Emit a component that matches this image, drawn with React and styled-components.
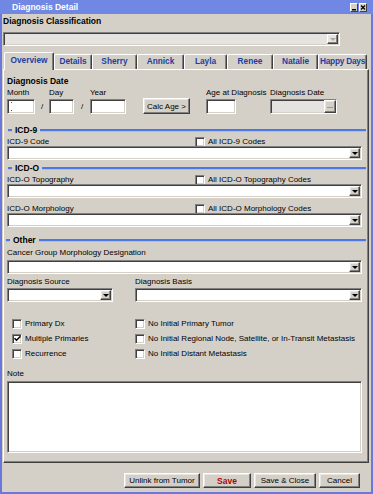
import React from 'react';
import styled, { createGlobalStyle, css } from 'styled-components';

const Global = createGlobalStyle`
  html, body { margin: 0; padding: 0; background: #d4d0c8; }
  body { font-family: "Liberation Sans", Arial, sans-serif; font-size: 8px; color: #000; }
  * { box-sizing: border-box; }
`;

const sunken = css`
  border: 1px solid;
  border-color: #808080 #ffffff #ffffff #808080;
  box-shadow: inset 1px 1px 0 #404040, inset -1px -1px 0 #d4d0c8;
`;

const raised = css`
  border: 1px solid;
  border-color: #ffffff #404040 #404040 #ffffff;
  box-shadow: inset -1px -1px 0 #808080, inset 1px 1px 0 #e8e6e0;
`;

const Window = styled.div`
  width: 373px;
  height: 494px;
  display: flex;
  flex-direction: column;
  background: #d4d0c8;
`;

const TitleBar = styled.div`
  height: 14px;
  flex: none;
  background: #7087e4;
  display: flex;
  align-items: center;
  padding: 0 6px 0 12px;
`;

const TitleText = styled.div`
  flex: 1;
  color: #fff;
  font-weight: bold;
  font-size: 8.5px;
  line-height: 14px;
`;

const TitleBtn = styled.div`
  width: 8px;
  height: 9px;
  margin-left: 1px;
  background: #d4d0c8;
  border: 1px solid;
  border-color: #fff #404040 #404040 #fff;
  display: flex;
  align-items: center;
  justify-content: center;
`;

const Frame = styled.div`
  flex: 1;
  display: flex;
  flex-direction: column;
  border: 2px solid #6a78de;
  border-top: none;
  padding-left: 1px;
`;

const ClassLabel = styled.div`
  margin-top: 2px;
  height: 10px;
  line-height: 10px;
  font-weight: bold;
  font-size: 8.5px;
`;

const SelectBox = styled.div`
  ${sunken};
  width: ${p => p.$w || '100%'};
  height: 14px;
  margin-top: ${p => p.$mt || 0}px;
  padding: 1px;
  background: ${p => (p.$disabled ? '#e4e3e0' : '#fff')};
  display: flex;
  justify-content: flex-end;
  flex: none;
`;

const DropBtn = styled.div`
  ${raised};
  width: 11px;
  background: ${p => (p.$disabled ? '#e6e5e2' : '#d4d0c8')};
  display: flex;
  align-items: center;
  justify-content: center;
`;

const Tri = styled.span`
  width: 0;
  height: 0;
  border-left: 3px solid transparent;
  border-right: 3px solid transparent;
  border-top: 3px solid ${p => (p.$disabled ? '#a8a8a8' : '#000')};
`;

const Select = ({ w, mt, disabled }) => (
  <SelectBox $w={w} $mt={mt} $disabled={disabled}>
    <DropBtn $disabled={disabled}>
      <Tri $disabled={disabled} />
    </DropBtn>
  </SelectBox>
);

const TabRow = styled.div`
  margin-top: 6px;
  height: 17px;
  display: flex;
  align-items: flex-end;
  padding-left: 1px;
  position: relative;
  z-index: 1;
`;

const Tab = styled.div`
  width: ${p => p.$w}px;
  height: ${p => (p.$active ? 18 : 15)}px;
  margin-bottom: ${p => (p.$active ? -1 : 0)}px;
  background: #d4d0c8;
  border-top: 1px solid #fff;
  border-left: 1px solid #fff;
  border-right: 1px solid #404040;
  box-shadow: inset -1px 0 0 #808080;
  border-radius: 2px 2px 0 0;
  color: #1c3f9f;
  font-weight: bold;
  font-size: 8.3px;
  letter-spacing: ${p => (p.$tight ? '-0.25px' : '0')};
  line-height: ${p => (p.$active ? 14 : 13)}px;
  text-align: center;
  white-space: nowrap;
  display: flex;
  justify-content: center;
`;

const Panel = styled.div`
  width: 366px;
  height: 394px;
  border: 1px solid;
  border-color: #fff #404040 #404040 #fff;
  box-shadow: inset -1px -1px 0 #808080;
  padding: 0 6px 0 3px;
  display: flex;
  flex-direction: column;
`;

const Label = styled.div`
  margin-top: ${p => p.$mt || 0}px;
  height: 10px;
  line-height: 10px;
  white-space: nowrap;
  font-weight: ${p => (p.$bold ? 'bold' : 'normal')};
  font-size: ${p => (p.$bold ? '8.5px' : '8px')};
`;

const DateGrid = styled.div`
  margin-top: 2px;
  display: grid;
  grid-template-columns: 28px 14px 25px 16px 36px 17px 47px 16px 30px 34px 67px;
  grid-template-rows: 10px 15px;
  row-gap: 1px;
  align-items: center;
`;

const Cell = styled.div`
  grid-column: ${p => p.$c};
  grid-row: ${p => p.$r};
  line-height: 10px;
  white-space: nowrap;
  text-align: ${p => p.$center ? 'center' : 'left'};
`;

const TextInput = styled.div`
  ${sunken};
  grid-column: ${p => p.$c};
  grid-row: 2;
  height: 15px;
  background: ${p => (p.$disabled ? '#e4e3e0' : '#fff')};
  display: flex;
  justify-content: flex-end;
  padding: 1px;
`;

const Caret = styled.span`
  margin: 1px auto 1px 2px;
  width: 1px;
  border-top: 1px solid #2a4fd0;
  border-bottom: 1px solid #2a4fd0;
`;

const Button = styled.div`
  ${raised};
  width: ${p => p.$w}px;
  height: ${p => p.$h || 15}px;
  background: #d4d0c8;
  display: flex;
  align-items: center;
  justify-content: center;
  white-space: nowrap;
  font-size: ${p => (p.$bold ? '8.5px' : '8px')};
  font-weight: ${p => (p.$bold ? 'bold' : 'normal')};
  color: ${p => (p.$bold ? '#b40000' : '#000')};
`;

const CalcBtn = styled(Button)`
  grid-column: 7;
  grid-row: 2;
  align-self: end;
`;

const EllBtn = styled.div`
  ${raised};
  width: 12px;
  margin: -1px;
  background: #d4d0c8;
  font-size: 7px;
  line-height: 9px;
  text-align: center;
`;

const SectionHead = styled.div`
  margin-top: ${p => p.$mt}px;
  margin-right: -4px;
  margin-left: ${p => p.$ml || 1}px;
  height: 8px;
  display: flex;
  align-items: center;
  gap: 3px;
  font-weight: bold;
  font-size: 8.5px;
`;

const Rule = styled.span`
  height: 2px;
  background: #4b78e4;
  box-shadow: 0 1px 0 #a9bff2;
  flex: ${p => (p.$short ? '0 0 4px' : '1')};
`;

const LabelRow = styled.div`
  display: grid;
  grid-template-columns: 188px 1fr;
  align-items: center;
  height: 10px;
  margin-top: ${p => p.$mt || 0}px;
`;

const Check = styled.label`
  display: flex;
  align-items: center;
  gap: 3px;
  white-space: nowrap;
  height: 15px;
`;

const Box = styled.span`
  ${sunken};
  width: 10px;
  height: 10px;
  background: #fff;
  flex: none;
  display: flex;
  align-items: center;
  justify-content: center;
`;

const CheckBox = ({ checked, children }) => (
  <Check>
    <Box>
      {checked && (
        <svg width="7" height="7" viewBox="0 0 7 7">
          <path d="M0.5 3.2 L2.5 5.2 L6.5 1.2" stroke="#000" strokeWidth="1.5" fill="none" />
        </svg>
      )}
    </Box>
    {children}
  </Check>
);

const TwoCol = styled.div`
  display: grid;
  grid-template-columns: ${p => p.$cols};
  column-gap: ${p => p.$gap || 0}px;
  margin-top: ${p => p.$mt || 0}px;
  padding-left: ${p => p.$pl || 0}px;
`;

const Col = styled.div`
  display: flex;
  flex-direction: column;
`;

const NoteArea = styled.div`
  ${sunken};
  margin-top: 2px;
  height: 72px;
  background: #fff;
`;

const ButtonRow = styled.div`
  flex: 1;
  display: flex;
  justify-content: flex-end;
  align-items: flex-start;
  gap: 3px;
  padding: 10px 11px 0 0;
`;

const tabs = [
  ['Overview', 50],
  ['Details', 38],
  ['Sherry', 45],
  ['Annick', 47],
  ['Layla', 43],
  ['Renee', 46],
  ['Natalie', 45],
  ['Happy Days', 49],
];

export default function App() {
  return (
    <>
      <Global />
      <Window>
        <TitleBar>
          <TitleText>Diagnosis Detail</TitleText>
          <TitleBtn>
            <svg width="6" height="7" viewBox="0 0 6 7">
              <rect x="1" y="5" width="4" height="1.5" fill="#000" />
            </svg>
          </TitleBtn>
          <TitleBtn>
            <svg width="6" height="7" viewBox="0 0 6 7">
              <path d="M1 1.5 L5 5.5 M5 1.5 L1 5.5" stroke="#000" strokeWidth="1.2" />
            </svg>
          </TitleBtn>
        </TitleBar>
        <Frame>
          <ClassLabel>Diagnosis Classification</ClassLabel>
          <Select w="337px" mt={6} disabled />
          <TabRow>
            {tabs.map(([t, w], i) => (
              <Tab key={t} $w={w} $active={i === 0} $tight={t === 'Happy Days'}>{t}</Tab>
            ))}
          </TabRow>
          <Panel>
            <Label $bold $mt={6}>Diagnosis Date</Label>
            <DateGrid>
              <Cell $c={1} $r={1}>Month</Cell>
              <Cell $c={3} $r={1}>Day</Cell>
              <Cell $c={5} $r={1}>Year</Cell>
              <Cell $c={9} $r={1}>Age at Diagnosis</Cell>
              <Cell $c={11} $r={1}>Diagnosis Date</Cell>
              <TextInput $c={1}><Caret /></TextInput>
              <Cell $c={2} $r={2} $center>/</Cell>
              <TextInput $c={3} />
              <Cell $c={4} $r={2} $center>/</Cell>
              <TextInput $c={5} />
              <CalcBtn $w={47} $h={16}>Calc Age &gt;</CalcBtn>
              <TextInput $c={9} />
              <TextInput $c={11} $disabled>
                <EllBtn>...</EllBtn>
              </TextInput>
            </DateGrid>

            <SectionHead $mt={12}>
              <Rule $short />ICD-9<Rule />
            </SectionHead>
            <LabelRow>
              <span>ICD-9 Code</span>
              <CheckBox>All ICD-9 Codes</CheckBox>
            </LabelRow>
            <Select mt={2} />

            <SectionHead $mt={4}>
              <Rule $short />ICD-O<Rule />
            </SectionHead>
            <LabelRow>
              <span>ICD-O Topography</span>
              <CheckBox>All ICD-O Topography Codes</CheckBox>
            </LabelRow>
            <Select mt={2} />
            <LabelRow $mt={3}>
              <span>ICD-O Morphology</span>
              <CheckBox>All ICD-O Morphology Codes</CheckBox>
            </LabelRow>
            <Select mt={2} />

            <SectionHead $mt={9} $ml={-1}>
              <Rule $short />Other<Rule />
            </SectionHead>
            <Label $mt={4}>Cancer Group Morphology Designation</Label>
            <Select mt={2} />

            <TwoCol $cols="106px 1fr" $gap={22} $mt={3}>
              <Col>
                <Label>Diagnosis Source</Label>
                <Select mt={1} />
              </Col>
              <Col>
                <Label>Diagnosis Basis</Label>
                <Select mt={1} />
              </Col>
            </TwoCol>

            <TwoCol $cols="123px 1fr" $mt={14} $pl={5}>
              <Col>
                <CheckBox>Primary Dx</CheckBox>
                <CheckBox checked>Multiple Primaries</CheckBox>
                <CheckBox>Recurrence</CheckBox>
              </Col>
              <Col>
                <CheckBox>No Initial Primary Tumor</CheckBox>
                <CheckBox>No Initial Regional Node, Satellite, or In-Transit Metastasis</CheckBox>
                <CheckBox>No Initial Distant Metastasis</CheckBox>
              </Col>
            </TwoCol>

            <Label $mt={8}>Note</Label>
            <NoteArea />
          </Panel>
          <ButtonRow>
            <Button $w={76}>Unlink from Tumor</Button>
            <Button $w={48} $bold>Save</Button>
            <Button $w={62}>Save &amp; Close</Button>
            <Button $w={41}>Cancel</Button>
          </ButtonRow>
        </Frame>
      </Window>
    </>
  );
}
